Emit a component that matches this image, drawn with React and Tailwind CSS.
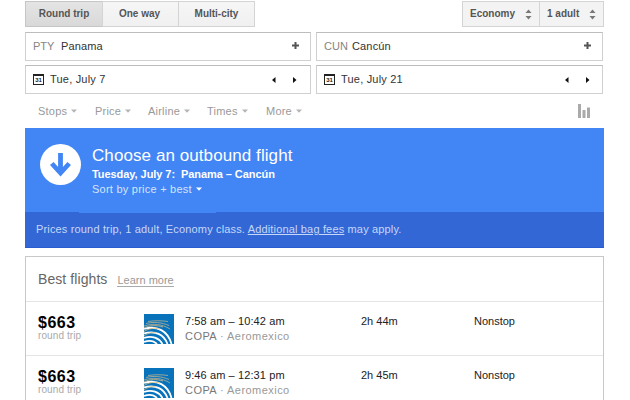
import React from 'react';

const TRIP_TYPES = [
  { label: 'Round trip', cls: 'w-[78px] bg-gradient-to-b from-[#e4e4e4] to-[#d9d9d9] border-[#c6c6c6]' },
  { label: 'One way', cls: 'w-[77px] pr-[2px] bg-gradient-to-b from-[#f6f6f6] to-[#f0f0f0] border-[#d4d4d4]' },
  { label: 'Multi-city', cls: 'w-[77px] bg-gradient-to-b from-[#f6f6f6] to-[#f0f0f0] border-[#d4d4d4]' },
];

const FILTERS = [
  { label: 'Stops', cls: 'w-[57px]' },
  { label: 'Price', cls: 'w-[53px]' },
  { label: 'Airline', cls: 'w-[59px]' },
  { label: 'Times', cls: 'w-[59px]' },
  { label: 'More', cls: 'w-[50px]' },
];

const FLIGHTS = [
  { price: '$663', time: '7:58 am – 10:42 am', duration: '2h 44m', stops: 'Nonstop' },
  { price: '$663', time: '9:46 am – 12:31 pm', duration: '2h 45m', stops: 'Nonstop' },
];

const Caret = ({ className }) => (
  <svg className={className} viewBox="0 0 6 4" fill="currentColor">
    <path d="M0 .5h6L3 3.8z" />
  </svg>
);

const UpDown = () => (
  <svg className="w-[7px] h-[11px] text-[#777]" viewBox="0 0 7 11" fill="currentColor">
    <path d="M.5 4 3.5.5 6.5 4zM.5 7h6l-3 3.5z" />
  </svg>
);

const Plus = () => (
  <svg className="w-[7px] h-[7px] text-[#555]" viewBox="0 0 7 7" fill="currentColor">
    <path d="M2.5 0h2v2.5H7v2H4.5V7h-2V4.5H0v-2h2.5z" />
  </svg>
);

const CalendarIcon = () => (
  <span className="w-[11px] h-[11px] border border-t-2 border-[#222] flex items-center justify-center text-[6px] leading-none font-bold text-[#222]">
    31
  </span>
);

const CopaLogo = () => (
  <svg className="w-[30px] h-[30px]" viewBox="0 0 30 30" fill="none">
    <rect width="30" height="30" fill="#0873bb" />
    <g stroke="#a5aa96" strokeWidth="0.9">
      <path d="M4 7.5c7-1 13-1 20 0" />
      <path d="M2 9.5c8-2 16-1 23 2" />
      <path d="M0 12c9-3 18-2 26 3" />
    </g>
    <g stroke="#fff" strokeWidth="1.8">
      <path d="M0 15c13-4 24 2 27.5 15" />
      <path d="M0 19.5c11-3.5 20 1 23.5 10.5" />
      <path d="M0 24c8-3 15 0 18.5 6" />
      <path d="M0 28c5-2 10-1 13 2" />
    </g>
    <path d="M0 14c6-3 13-3 19-1M0 17.5c5-3 10-4 16-2.5M0 22c4-3 7-4 12-3" stroke="#e0bd7e" strokeWidth="0.8" />
  </svg>
);

function AirportField({ code, city, className }) {
  return (
    <div className={`h-[29px] border border-[#d0d0d0] border-t-[#bdbdbd] flex items-center pl-[7px] pb-[2px] ${className}`}>
      <span className="text-[#858585] w-[28px]">{code}</span>
      <span className="flex-1 text-[#333] tracking-[0.15px]">{city}</span>
      <Plus />
    </div>
  );
}

function DateField({ date, className }) {
  return (
    <div className={`h-[29px] border border-[#d0d0d0] border-t-[#bdbdbd] flex items-center pl-[7px] ${className}`}>
      <CalendarIcon />
      <span className="flex-1 pl-[6px] pb-px text-[#333] tracking-[0.2px]">{date}</span>
      <svg className="w-[26px] h-[6px]" viewBox="0 0 26 6">
        <path d="M4.5 0v6L1 3zM22 0v6l3.5-3z" fill="#111" />
      </svg>
    </div>
  );
}

export default function App() {
  return (
    <div className="w-[630px] h-[400px] overflow-hidden bg-white pl-[25px] pr-[26px] pt-px font-['Liberation_Sans',Arial,sans-serif] text-[11px] leading-[14px] whitespace-nowrap">
      {/* Trip type and cabin */}
      <div className="flex justify-between h-[26px] text-[10px] font-bold text-[#555]">
        <div className="flex">
          {TRIP_TYPES.map(({ label, cls }) => (
            <button key={label} className={`border -mr-px last:mr-0 pb-px ${cls}`}>{label}</button>
          ))}
        </div>
        <div className="flex">
          <button className="w-[78px] flex items-center justify-between border border-[#d4d4d4] bg-[#f3f3f3] pl-[7px] pr-[7px]">
            <span className="pb-px">Economy</span>
            <UpDown />
          </button>
          <button className="w-[65px] -ml-px flex items-center justify-between border border-[#d4d4d4] bg-[#f3f3f3] pl-[7px] pr-[7px]">
            <span className="pb-px">1 adult</span>
            <UpDown />
          </button>
        </div>
      </div>

      {/* Route */}
      <div className="flex gap-[5px] mt-[5px]">
        <AirportField code="PTY" city="Panama" className="w-[286px] pr-[11px]" />
        <AirportField code="CUN" city="Cancún" className="w-[287px] pr-[11px]" />
      </div>
      <div className="flex gap-[5px] mt-[4px]">
        <DateField date="Tue, July 7" className="w-[286px] pr-[13px]" />
        <DateField date="Tue, July 21" className="w-[287px] pr-[12px]" />
      </div>

      {/* Filters */}
      <div className="flex h-[34px] pl-[13px] pr-[14px] items-center text-[#999]">
        {FILTERS.map(({ label, cls }) => (
          <span key={label} className={`flex items-center gap-[4px] tracking-[0.22px] ${cls}`}>
            {label}
            <Caret className="w-[6px] h-[4px] text-[#b5b5b5]" />
          </span>
        ))}
        <svg className="ml-auto w-[12px] h-[14px]" viewBox="0 0 12 14" fill="#aaa">
          <path d="M0 0h3v14H0zM4.5 6h3v8h-3zM9 3.5h3V14H9z" />
        </svg>
      </div>

      {/* Outbound banner */}
      <div className="h-[120px] bg-[#4285f4] text-white flex flex-col">
        <div className="h-[84px] flex pl-[15px] pt-[16px]">
          <svg className="w-[41px] h-[41px]" viewBox="0 0 41 41">
            <circle cx="20.5" cy="20.5" r="20.5" fill="#fff" />
            <path d="M20.5 9v20M11.8 19.5l8.7 9.5 8.7-9.5" fill="none" stroke="#4285f4" strokeWidth="4.8" />
          </svg>
          <div className="pl-[11px] pt-px">
            <h1 className="text-[17px] leading-[22px] tracking-[0.08px]">Choose an outbound flight</h1>
            <p className="font-bold leading-[14px] tracking-[-0.06px] whitespace-pre">Tuesday, July 7:  Panama – Cancún</p>
            <p className="leading-[16px] tracking-[0.24px] text-[#d5e4fd] flex items-center gap-[4px]">
              Sort by price + best
              <Caret className="w-[6px] h-[4px] text-white" />
            </p>
          </div>
        </div>
        <div className="flex-1 bg-[#3367d6] border-b border-[#2a5bd0] flex flex-col">
          <div className="w-[137px] h-px ml-[54px] bg-[#4285f4]" />
          <p className="pl-[11px] pt-[8px] leading-[16px] tracking-[0.16px] text-[#c6d7f8] whitespace-pre">
            Prices round trip, 1 adult, Economy class. <a className="underline">Additional bag fees</a> may apply.
          </p>
        </div>
      </div>

      {/* Results */}
      <div className="mt-[8px] h-[160px] border border-[#c8c8c8]">
        <div className="h-[45px] flex items-center pl-[12px] pb-px border-b border-[#e5e5e5]">
          <h2 className="text-[14px] text-[#666] tracking-[0.08px]">Best flights</h2>
          <a className="ml-[10px] mt-[4px] leading-[12px] text-[#999] border-b border-[#aaa]">Learn more</a>
        </div>
        {FLIGHTS.map(({ price, time, duration, stops }) => (
          <div key={time} className="h-[54px] flex pl-[12px] pt-[12px] border-b border-[#e5e5e5]">
            <div className="w-[106px]">
              <p className="text-[16px] leading-[17px] tracking-[0.5px] font-bold text-black">{price}</p>
              <p className="text-[10px] leading-[10px] tracking-[0.1px] text-[#aaa]">round trip</p>
            </div>
            <CopaLogo />
            <div className="w-[187px] pl-[11px]">
              <p className="text-[#222] tracking-[0.1px]">{time}</p>
              <p className="leading-[17px] tracking-[0.45px] text-[#777]">
                COPA <span className="text-[#999]">· Aeromexico</span>
              </p>
            </div>
            <span className="w-[113px] text-[#222]">{duration}</span>
            <span className="text-[#222]">{stops}</span>
          </div>
        ))}
      </div>
    </div>
  );
}
